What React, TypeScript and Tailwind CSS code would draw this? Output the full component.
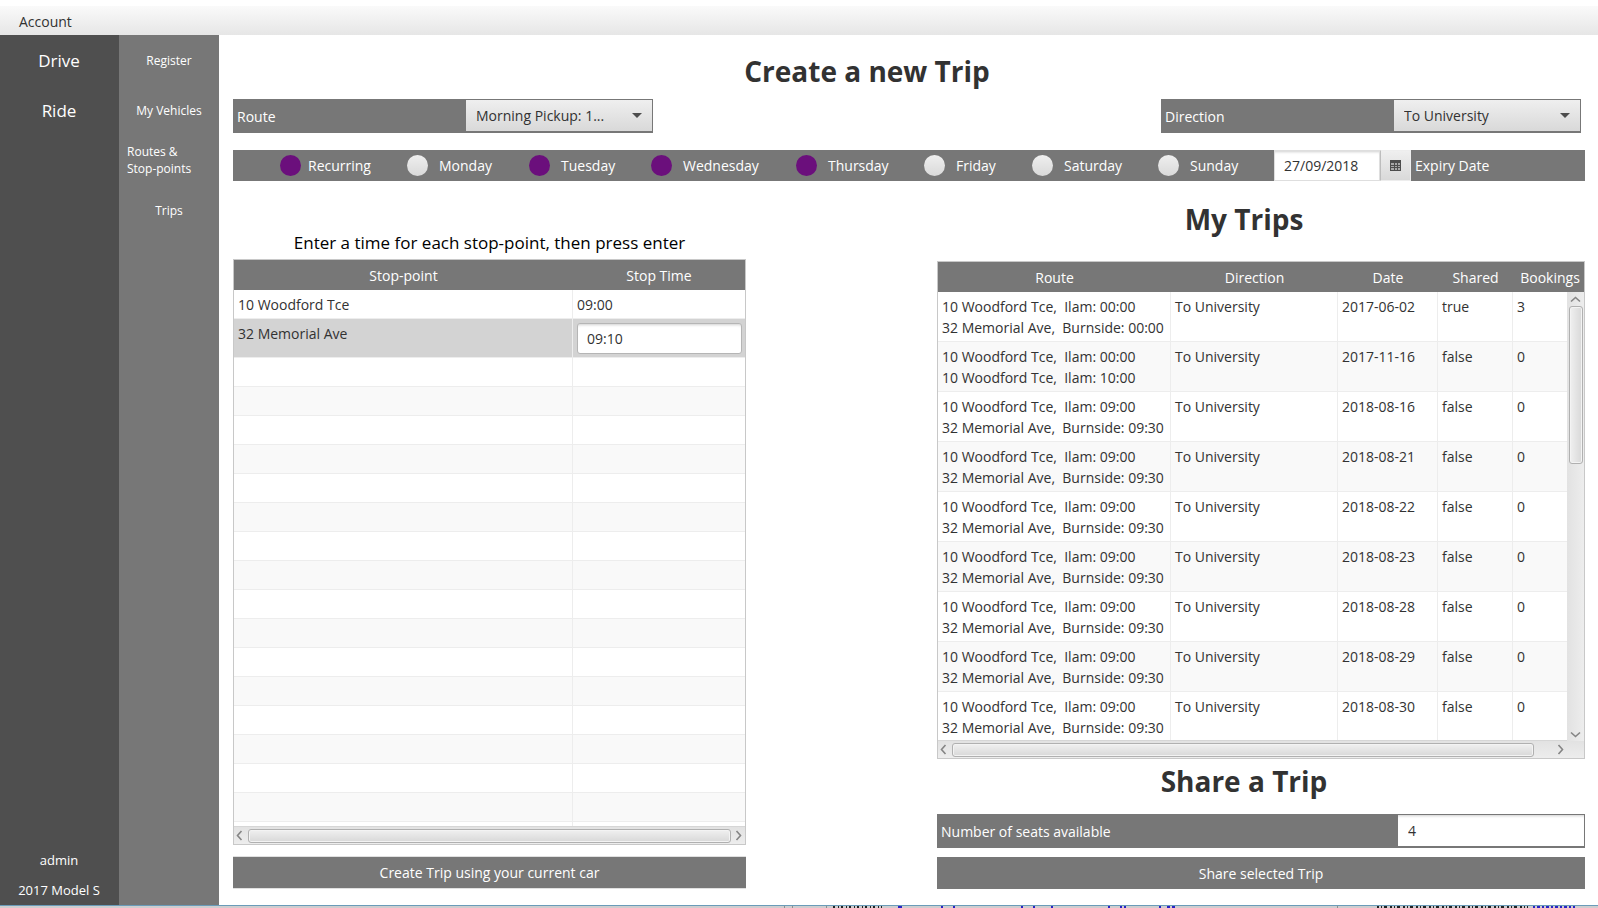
import React from "react";

const FONT = "font-['Open_Sans',sans-serif]";

const days = [
  { name: "Recurring", on: true },
  { name: "Monday", on: false },
  { name: "Tuesday", on: true },
  { name: "Wednesday", on: true },
  { name: "Thursday", on: true },
  { name: "Friday", on: false },
  { name: "Saturday", on: false },
  { name: "Sunday", on: false },
];

const A = "10 Woodford Tce,\u00a0 Ilam: ";
const B = "32 Memorial Ave,\u00a0 Burnside: ";

const trips = [
  { route: [A + "00:00", B + "00:00"], date: "2017-06-02", shared: true, bookings: 3 },
  { route: [A + "00:00", A + "10:00"], date: "2017-11-16", shared: false, bookings: 0 },
  { route: [A + "09:00", B + "09:30"], date: "2018-08-16", shared: false, bookings: 0 },
  { route: [A + "09:00", B + "09:30"], date: "2018-08-21", shared: false, bookings: 0 },
  { route: [A + "09:00", B + "09:30"], date: "2018-08-22", shared: false, bookings: 0 },
  { route: [A + "09:00", B + "09:30"], date: "2018-08-23", shared: false, bookings: 0 },
  { route: [A + "09:00", B + "09:30"], date: "2018-08-28", shared: false, bookings: 0 },
  { route: [A + "09:00", B + "09:30"], date: "2018-08-29", shared: false, bookings: 0 },
  { route: [A + "09:00", B + "09:30"], date: "2018-08-30", shared: false, bookings: 0 },
];

const emptyRows = Array.from({ length: 17 }, (_, i) => i);

function Chevron({ d, w, h }: { d: string; w: number; h: number }) {
  return (
    <svg width={w} height={h} viewBox={`0 0 ${w} ${h}`} fill="none" stroke="#858585" strokeWidth="1.6" aria-hidden="true">
      <path d={d} />
    </svg>
  );
}

function HorizontalBar({ thumb, corner = false }: { thumb: string; corner?: boolean }) {
  return (
    <div className={`flex h-[18px] shrink-0 items-center border-t border-[#d6d6d6] bg-linear-to-b from-[#e2e2e2] to-[#ededed] ${corner ? "pr-[17px]" : ""}`}>
      <button aria-label="Scroll left" className="flex w-[14px] shrink-0 items-center pl-[2px]">
        <Chevron d="M5.5 1 L1.5 5.5 L5.5 10" w={7} h={11} />
      </button>
      <div className={`h-[14px] rounded-[3px] border border-[#b0b0b0] bg-linear-to-b from-[#f0f0f0] to-[#d8d8d8] shadow-[inset_0_0_0_1px_#f3f3f3] ${thumb}`} />
      <button aria-label="Scroll right" className="ml-auto flex w-[14px] shrink-0 items-center justify-center">
        <Chevron d="M1.5 1 L5.5 5.5 L1.5 10" w={7} h={11} />
      </button>
    </div>
  );
}

function PickerRow({ id, label, value }: { id: string; label: string; value: string }) {
  return (
    <div className="flex h-[34px] w-[420px] bg-[#777777] pt-px pr-px pb-[2px]">
      <label htmlFor={id} className="flex-1 self-center pt-[2px] pl-1 text-white">
        {label}
      </label>
      <div className="relative w-[186px]">
        <select
          id={id}
          defaultValue={value}
          className="h-full w-full appearance-none bg-linear-to-b from-[#efefef] to-[#d9d9d9] pl-[10px] text-[#323232] outline-none"
        >
          <option>{value}</option>
        </select>
        <svg className="pointer-events-none absolute top-[13px] right-[10px]" width="10" height="5" viewBox="0 0 10 5" aria-hidden="true">
          <path d="M0 0H10L5 5Z" fill="#4d4d4d" />
        </svg>
      </div>
    </div>
  );
}

function Heading({ children }: { children: React.ReactNode }) {
  return <h2 className="pr-[34px] text-center text-[28px] leading-9 font-bold text-[#323232]">{children}</h2>;
}

/* Sliver of the window that lies behind this one, seen under the bottom border. */
function BackgroundWindowEdge() {
  return (
    <div className="flex h-[3px] shrink-0 justify-end overflow-hidden border-t border-[#6a9cb9] bg-[#cfcdcf]">
      <svg width="828" height="2" viewBox="0 0 828 2" fill="none" strokeWidth="2" aria-hidden="true">
        <path d="M14 1h1M22 1h1M56 1h1M567 1h1" stroke="#8f8f8f" />
        <path d="M63 1H112" stroke="#222222" strokeDasharray="2 3 1 2" />
        <path d="M607 1H758" stroke="#222222" strokeDasharray="2 2 1 2 3 3" />
        <path d="M128 1h4M171 1h2M183 1h2M251 1h2M263 1h2M281 1h2M338 1h2M350 1h2M354 1h2M389 1h2M397 1h3M402 1h3" stroke="#2a22c4" />
        <path d="M763 1H805" stroke="#2a22c4" strokeDasharray="2 2 3 2" />
      </svg>
    </div>
  );
}

export default function App() {
  return (
    <div className={`flex h-screen min-h-[640px] flex-col overflow-hidden bg-white text-[14px] leading-[21px] text-[#323232] ${FONT}`}>
      <header className="mt-[6px] flex h-[29px] shrink-0 items-center bg-linear-to-b from-[#fafafa] to-[#e6e6e6] pt-px pl-[19px]">
        <button className="text-[#323232]">Account</button>
      </header>

      <div className="flex min-h-0 flex-1">
        <nav className="flex w-[119px] shrink-0 flex-col items-center bg-[#4f4f4f] pr-px text-white">
          <a href="#drive" className="flex h-[50px] items-center text-[17px]">Drive</a>
          <a href="#ride" className="flex h-[50px] items-center text-[17px]">Ride</a>
          <div className="mt-auto flex flex-col items-center text-[13px]">
            <span className="flex h-[30px] items-center">admin</span>
            <span className="flex h-[30px] items-center">2017 Model S</span>
          </div>
        </nav>

        <nav className="flex w-[100px] shrink-0 flex-col items-center bg-[#777777] text-[12px] leading-[17px] text-white">
          <a href="#register" className="flex h-[50px] items-center">Register</a>
          <a href="#vehicles" className="flex h-[50px] items-center">My Vehicles</a>
          <a href="#routes" className="flex h-[50px] w-full items-center pl-2">
            Routes &amp;
            <br />
            Stop-points
          </a>
          <a href="#trips" className="flex h-[50px] items-center">Trips</a>
        </nav>

        <main className="flex min-w-0 flex-1 flex-col pt-[18px] pr-[13px] pb-4 pl-[14px]">
          <h1 className="pr-[84px] text-center text-[28px] leading-9 font-bold text-[#323232]">Create a new Trip</h1>

          <div className="mt-[10px] flex justify-between pr-1">
            <PickerRow id="route" label="Route" value="Morning Pickup: 1..." />
            <PickerRow id="direction" label="Direction" value="To University" />
          </div>

          <div className="mt-[17px] flex h-[31px] shrink-0 bg-[#777777] text-white">
            <div className="grid flex-1 grid-cols-[127fr_122fr_122fr_145fr_128fr_108fr_126fr_116fr] items-center pl-[47px]">
              {days.map((d, i) => (
                <label key={d.name} className={i === 0 ? "flex items-center gap-[7px]" : "flex items-center gap-[11px]"}>
                  <input
                    type="checkbox"
                    defaultChecked={d.on}
                    className="size-[21px] shrink-0 appearance-none rounded-full bg-linear-to-b from-[#efefef] to-[#d9d9d9] checked:bg-[#6b0f7c] checked:bg-none"
                  />
                  {d.name}
                </label>
              ))}
            </div>
            <input
              id="expiry"
              defaultValue="27/09/2018"
              className="w-[106px] border border-[#dedede] bg-white px-[9px] text-[#323232] shadow-[inset_0_3px_3px_-2px_#d0d0d0] outline-none"
            />
            <button
              aria-label="Open calendar"
              className="flex w-[31px] items-center justify-center border border-[#ededed] border-l-[#bdbdbd] bg-linear-to-b from-[#efefef] to-[#d9d9d9] pr-px"
            >
              <svg width="11" height="11" viewBox="0 0 11 11" aria-hidden="true">
                <path d="M0 0H11V11H0Z" fill="#4d4d4d" />
                <path d="M1 3H4V5H1ZM5 3H7V5H5ZM8 3H10V5H8ZM1 6H4V7H1ZM5 6H7V7H5ZM8 6H10V7H8ZM1 8H4V10H1ZM5 8H7V10H5ZM8 8H10V10H8Z" fill="#a8a8a8" />
              </svg>
            </button>
            <label htmlFor="expiry" className="w-[174px] self-center pl-1">
              Expiry Date
            </label>
          </div>

          <div className="flex min-h-0 flex-1 justify-between">
            <section className="flex w-[513px] shrink-0 flex-col pt-[50px]">
              <p className="text-center text-[17px] leading-6 text-black">Enter a time for each stop-point, then press enter</p>
              <div className="mt-1 flex min-h-0 flex-1 flex-col border border-[#c8c8c8]">
                <div className="min-h-0 flex-1 overflow-hidden">
                  <table className="w-full table-fixed border-separate border-spacing-0">
                    <colgroup>
                      <col className="w-[339px]" />
                      <col />
                    </colgroup>
                    <thead>
                      <tr className="h-[30px] bg-[#777777] text-white">
                        <th className="font-normal">Stop-point</th>
                        <th className="font-normal">Stop Time</th>
                      </tr>
                    </thead>
                    <tbody>
                      <tr className="h-[29px]">
                        <td className="border-r border-b border-[#ededed] px-1 py-0">10 Woodford Tce</td>
                        <td className="border-b border-[#ededed] px-1 py-0">09:00</td>
                      </tr>
                      <tr className="h-[39px] bg-[#d3d3d3]">
                        <td className="border-r border-b border-[#ededed] px-1 pt-1 align-top">32 Memorial Ave</td>
                        <td className="border-b border-[#ededed] py-0 pr-[3px] pl-1">
                          <input
                            aria-label="Stop time"
                            defaultValue="09:10"
                            className="block h-[31px] w-full rounded-[3px] border border-[#b5b5b5] bg-white px-[9px] shadow-[inset_0_3px_3px_-2px_#d0d0d0] outline-none"
                          />
                        </td>
                      </tr>
                      {emptyRows.map((i) => (
                        <tr key={i} className="h-[29px]">
                          <td className={i % 2 ? "border-r border-b border-[#ededed] bg-[#f9f9f9]" : "border-r border-b border-[#ededed]"} />
                          <td className={i % 2 ? "border-b border-[#ededed] bg-[#f9f9f9]" : "border-b border-[#ededed]"} />
                        </tr>
                      ))}
                    </tbody>
                  </table>
                </div>
                <HorizontalBar thumb="flex-1" />
              </div>
              <button className="mt-[11px] h-[33px] shrink-0 border-y border-[#e0e0e0] bg-[#777777] text-white">Create Trip using your current car</button>
            </section>

            <section className="flex w-[648px] shrink-0 flex-col pt-5">
              <Heading>My Trips</Heading>
              <div className="relative mt-6 flex min-h-0 flex-1 flex-col border border-[#c8c8c8]">
                <div className="min-h-0 flex-1 overflow-hidden">
                  <table className="w-full table-fixed border-separate border-spacing-0">
                    <colgroup>
                      <col className="w-[233px]" />
                      <col className="w-[167px]" />
                      <col className="w-[100px]" />
                      <col className="w-[75px]" />
                      <col />
                    </colgroup>
                    <thead>
                      <tr className="h-[30px] bg-[#777777] text-white">
                        {["Route", "Direction", "Date", "Shared", "Bookings"].map((h) => (
                          <th key={h} className="p-0 font-normal last:pl-[3px]">
                            {h}
                          </th>
                        ))}
                      </tr>
                    </thead>
                    <tbody>
                      {trips.map((t) => (
                        <tr
                          key={t.date}
                          className="h-[50px] align-top even:bg-[#f9f9f9] [&>td]:border-r [&>td]:border-b [&>td]:border-[#ededed] [&>td]:px-1 [&>td]:pt-1 [&>td]:pb-[3px]"
                        >
                          <td className="whitespace-nowrap">
                            {t.route[0]}
                            <br />
                            {t.route[1]}
                          </td>
                          <td>To University</td>
                          <td>{t.date}</td>
                          <td>{String(t.shared)}</td>
                          <td>{t.bookings}</td>
                        </tr>
                      ))}
                    </tbody>
                  </table>
                </div>
                <HorizontalBar thumb="w-[582px]" corner />
                <div className="absolute top-[30px] right-0 bottom-[17px] flex w-[17px] flex-col items-center bg-linear-to-r from-[#e2e2e2] to-[#ededed]">
                  <button aria-label="Scroll up" className="flex h-[14px] items-center">
                    <Chevron d="M1 5.5 L5.5 1.5 L10 5.5" w={11} h={7} />
                  </button>
                  <div className="h-[158px] w-[14px] rounded-[3px] border border-[#b0b0b0] bg-linear-to-r from-[#f0f0f0] to-[#d8d8d8] shadow-[inset_0_0_0_1px_#f3f3f3]" />
                  <button aria-label="Scroll down" className="mt-auto flex h-[14px] items-center">
                    <Chevron d="M1 1.5 L5.5 5.5 L10 1.5" w={11} h={7} />
                  </button>
                </div>
              </div>

              <div className="pt-1 pb-[15px]">
                <Heading>Share a Trip</Heading>
              </div>
              <div className="flex h-[34px] shrink-0 bg-[#777777] pt-px pr-px pb-[2px]">
                <label htmlFor="seats" className="flex-1 self-center pt-[2px] pl-1 text-white">
                  Number of seats available
                </label>
                <input
                  id="seats"
                  defaultValue="4"
                  className="w-[186px] bg-white px-[10px] shadow-[inset_0_3px_3px_-2px_#d0d0d0] outline-none"
                />
              </div>
              <button className="mt-[9px] h-8 shrink-0 bg-[#777777] text-white">Share selected Trip</button>
            </section>
          </div>
        </main>
      </div>

      <BackgroundWindowEdge />
    </div>
  );
}
